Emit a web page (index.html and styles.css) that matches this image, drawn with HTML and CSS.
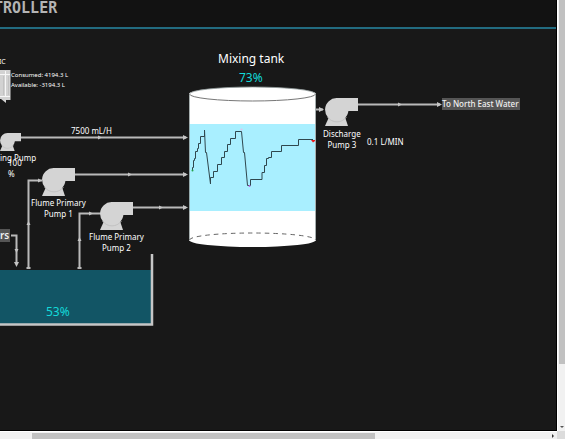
FILE: index.html
```html
<!DOCTYPE html>
<html lang="en">
<head>
<meta charset="utf-8">
<title>Controller</title>
<link rel="stylesheet" href="styles.css">
</head>
<body>
<div class="window">
  <main class="screen">
    <header class="bar"><h1 class="bar-title">TROLLER</h1></header>
    <section class="canvas">
      <svg class="diagram" width="557" height="400" viewBox="0 29 557 400" aria-hidden="true">
        <defs>
          <symbol id="pump" viewBox="0 0 33 28">
            <path d="M4 19 L0 28 H23 L20 19Z" fill="#d4d4d4"/>
            <path d="M12 0 H33 V13 H23.4 A11.7 11.7 0 1 1 12 0Z" fill="#d4d4d4"/>
            <path d="M2.5 19 A11.7 11.7 0 0 0 21.5 19" fill="none" stroke="#bcbcbc" stroke-width=".8"/>
          </symbol>
          <path id="tip" d="M-4 -2.5 L1 0 L-4 2.5Z"/>
          <path id="flow" d="M-3 -2 L1 0 L-3 2Z"/>
        </defs>

        <!-- chemical tote -->
        <path d="M-2 70H10.5V100H6V103L1 99H-2Z" fill="#d2d2d2"/>
        <path d="M0 74.5H10M0 96.5H10M5.5 71V97" stroke="#f6f6f6" fill="none"/>
        <path d="M3.5 76V95M8.5 76V95" stroke="#c2c2c2" fill="none"/>

        <!-- reservoir -->
        <rect x="0" y="270" width="151" height="54" fill="#125565"/>
        <path d="M0 324.500H152V254" fill="none" stroke="#c6c6c6" stroke-width="2.5"/>

        <!-- pipes -->
        <g fill="none" stroke="#b9b9b9" stroke-width="2">
          <path d="M21 137.5H186"/>
          <path d="M75 174.5H186"/>
          <path d="M133 207.5H186"/>
          <path d="M316 109.5H323"/>
          <path d="M358 104.5H440"/>
          <path d="M28.5 268V180.5H42"/>
          <path d="M79.5 268V213.5H101"/>
          <path d="M11 235.5H16.5V264"/>
          <path d="M26.5 268H30.5M77.5 268H81.5"/>
        </g>
        <g fill="#c4c4c4">
          <use href="#flow" x="101" y="137.5"/><use href="#tip" x="187" y="137.5"/>
          <use href="#flow" x="131" y="174.5"/><use href="#tip" x="187" y="174.5"/>
          <use href="#flow" x="162" y="207.5"/><use href="#tip" x="187" y="207.5"/>
          <use href="#tip" x="323" y="109.5"/><use href="#flow" x="401" y="104.5"/>
          <use href="#tip" x="441" y="104.5"/><use href="#flow" x="41" y="180.5"/>
          <use href="#flow" x="92" y="213.5"/>
          <use href="#flow" transform="translate(28.5 222) rotate(-90)"/>
          <use href="#flow" transform="translate(79.5 238) rotate(-90)"/>
          <use href="#flow" transform="translate(16.5 252) rotate(90)"/>
          <use href="#tip" transform="translate(16.5 266) rotate(90)"/>
        </g>

        <!-- pumps -->
        <use href="#pump" x="0" y="133" width="21" height="18"/>
        <use href="#pump" x="42" y="168" width="33" height="28"/>
        <use href="#pump" x="100" y="202" width="33" height="28"/>
        <use href="#pump" x="325" y="98" width="33" height="28"/>

        <!-- mixing tank -->
        <path d="M189 94A63.5 7 0 0 1 316 94V240A63.5 7 0 0 1 189 240Z" fill="#fff"/>
        <rect x="189" y="124" width="126" height="87" fill="#a9efff"/>
        <path d="M189.5 240V94A63 7 0 0 1 315.5 94V240" fill="none" stroke="#8f9999" stroke-width=".8"/>
        <path d="M189.5 94A63 7 0 0 0 315.5 94" fill="none" stroke="#777"/>
        <path d="M189.5 240A63 7 0 0 1 315.5 240" fill="none" stroke="#666" stroke-dasharray="4.5 4"/>

        <!-- level trend -->
        <path d="M192.5 170V167.5H193.5V160.5H194.5V158.5H195.5V151.5H197.5V148.5H198.5V143.5H200.5V136.5H204.5V130L205.5 152.5H206.5L210.5 184V177.5H213.5V171.5H217.5V164.5H221.5V157.5H224.5V151.5H227.5V144.5H230.5V138.5H235.5V131.5H241.5L243.5 152.5H244.5L247.5 185.500H250.5V179.5H262V172.5H264.5V165.5H266.5V158.5H268.5V157.5H271.5V151.5H281.5V145.5H298.5V139.5H313" transform="translate(0 0)" fill="none" stroke="#2f474e"/>
        <circle cx="192.5" cy="170.5" r="1" fill="#24a24a"/>
        <circle cx="241.5" cy="129.5" r="1" fill="#e7bfe9"/>
        <circle cx="249.5" cy="186" r="1" fill="#b66be0"/>
        <path d="M311 140H315V141L313 142.5Z" fill="#f01818"/>
      </svg>

      <div class="node tote-name">IC</div>
      <div class="node tote-data">Consumed: 4194.3 L<br>Available: -3194.3 L</div>
      <div class="node dose-rate">7500 mL/H</div>
      <div class="node dose-name">ing Pump</div>
      <div class="node dose-duty">100<br>%</div>
      <div class="node pump-one">Flume Primary<br>Pump 1</div>
      <div class="node pump-two">Flume Primary<br>Pump 2</div>
      <div class="node pump-three">Discharge<br>Pump 3</div>
      <div class="node flow-rate">0.1 L/MIN</div>
      <a class="node link source" href="#">rs</a>
      <a class="node link outlet" href="#">To North East Water</a>
      <h2 class="node large tank-name">Mixing tank</h2>
      <div class="node large level tank-level">73%</div>
      <div class="node large level reservoir-level">53%</div>
    </section>
  </main>
  <div class="track track-y"><div class="thumb thumb-y"></div><div class="arrow arrow-down"></div></div>
  <div class="track track-x"><div class="thumb thumb-x"></div><div class="arrow arrow-right"></div></div>
  <div class="corner"></div>
</div>
</body>
</html>
```

FILE: styles.css
```css
* { box-sizing: border-box; }

body {
  margin: 0;
  font-family: "Noto Sans", sans-serif;
  font-size: 8px;
  line-height: 11px;
  color: #fff;
  background: #181818;
}

.window {
  display: grid;
  grid-template-columns: 1fr 8px;
  grid-template-rows: 1fr 8px;
  height: 100vh;
}

.screen {
  display: flex;
  flex-direction: column;
  min-width: 0;
  min-height: 0;
  overflow: hidden;
  border-right: 1px solid #000;
  border-bottom: 1px solid #000;
}

.bar {
  height: 29px;
  flex: none;
  background: #121212;
  border-bottom: 2px solid #226b80;
}

.bar-title {
  margin: 0 0 0 -6px;
  font: bold 15px/16px "DejaVu Sans Mono", monospace;
  color: #b4b4b4;
}

.canvas {
  position: relative;
  flex: 1;
  overflow: hidden;
  background: #181818;
}

.diagram { display: block; }

.node {
  position: absolute;
  margin: 0;
  text-align: center;
  white-space: nowrap;
  font-weight: 400;
}

.large { font-size: 12px; line-height: 16px; }
.level { color: #12dada; }

.link {
  color: #f0f0f0;
  background: #555;
  text-decoration: none;
}

.tote-name { left: -1px; top: 27px; font-size: 7px; }
.tote-data { left: 11px; top: 41px; font-size: 6px; line-height: 10px; text-align: left; }
.dose-rate { left: 71px; top: 96px; }
.dose-name { left: 0; top: 123px; }
.dose-duty { left: 8px; top: 128px; text-align: left; }
.pump-one { left: 31px; top: 168px; }
.pump-two { left: 89px; top: 202px; }
.pump-three { left: 323px; top: 99px; }
.flow-rate { left: 367px; top: 107px; }
.source { left: 0; top: 200px; padding-right: 1px; font-size: 10px; line-height: 13px; font-weight: 600; }
.outlet { left: 442px; top: 69px; padding-right: 1px; line-height: 12px; font-weight: 500; }
.tank-name { left: 218px; top: 22px; }
.tank-level { left: 239px; top: 41px; }
.reservoir-level { left: 46px; top: 275px; }

.track { display: flex; background: #f1f1f1; }
.track-y { flex-direction: column; justify-content: space-between; align-items: center; padding-bottom: 3px; border-left: 1px solid #fff; }
.track-x { justify-content: space-between; align-items: center; padding-right: 3px; border-top: 1px solid #fff; }
.thumb { background: #c1c1c1; }
.thumb-y { width: 6px; height: 85%; }
.thumb-x { height: 6px; width: 62%; margin-left: 32px; }
.arrow { width: 0; height: 0; border: 2px solid transparent; }
.arrow-down { border-top-color: #555; border-bottom: 0; }
.arrow-right { border-left-color: #333; border-right: 0; margin-left: auto; }
.corner { background: #dcdcdc; }
```
